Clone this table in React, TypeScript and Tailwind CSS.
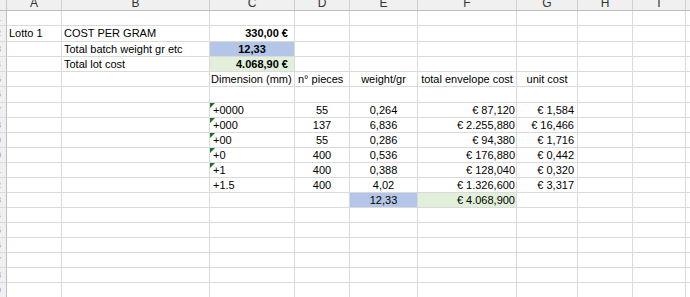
import React from "react";

type Cell = {
  t?: string;
  a?: "l" | "c" | "r";
  b?: boolean;
  bg?: string;
  pad?: string;
  tri?: boolean;
};

const widths = [
  "w-[55px]",
  "w-[148px]",
  "w-[85px]",
  "w-[55px]",
  "w-[68px]",
  "w-[99px]",
  "w-[61px]",
  "w-[55px]",
  "w-[53px]",
];

const letters = ["A", "B", "C", "D", "E", "F", "G", "H", "I"];

const E: Cell = {};

const rows: { h: string; cells: Cell[] }[] = [
  { h: "h-[15px]", cells: [] },
  {
    h: "h-[16px]",
    cells: [
      { t: "Lotto 1", a: "l" },
      { t: "COST PER GRAM", a: "l" },
      { t: "330,00 €", a: "r", b: true, pad: "pr-[6px]" },
    ],
  },
  {
    h: "h-[15px]",
    cells: [E, { t: "Total batch weight gr etc", a: "l" }, { t: "12,33", a: "c", b: true, bg: "bg-[#b4c6e7]" }],
  },
  {
    h: "h-[15px]",
    cells: [E, { t: "Total lot cost", a: "l" }, { t: "4.068,90 €", a: "r", b: true, bg: "bg-[#e2efda]", pad: "pr-[6px]" }],
  },
  {
    h: "h-[15px]",
    cells: [
      E,
      E,
      { t: "Dimension (mm)", a: "l", pad: "pl-[1px]" },
      { t: "n° pieces", a: "l", pad: "pl-[3px]" },
      { t: "weight/gr", a: "c" },
      { t: "total envelope cost", a: "c" },
      { t: "unit cost", a: "c" },
    ],
  },
  { h: "h-[16px]", cells: [] },
  ...[
    ["+0000", "55", "0,264", "€ 87,120", "€ 1,584", true],
    ["+000", "137", "6,836", "€ 2.255,880", "€ 16,466", true],
    ["+00", "55", "0,286", "€ 94,380", "€ 1,716", true],
    ["+0", "400", "0,536", "€ 176,880", "€ 0,442", true],
    ["+1", "400", "0,388", "€ 128,040", "€ 0,320", true],
    ["+1.5", "400", "4,02", "€ 1.326,600", "€ 3,317", false],
  ].map((r) => ({
    h: "h-[15px]",
    cells: [
      E,
      E,
      { t: r[0] as string, a: "l" as const, pad: "pl-[3px]", tri: r[5] as boolean },
      { t: r[1] as string, a: "c" as const },
      { t: r[2] as string, a: "c" as const },
      { t: r[3] as string, a: "r" as const, pad: "pr-[1px]" },
      { t: r[4] as string, a: "r" as const, pad: "pr-[3px]" },
    ],
  })),
  {
    h: "h-[15px]",
    cells: [
      E,
      E,
      E,
      E,
      { t: "12,33", a: "c", bg: "bg-[#b4c6e7]" },
      { t: "€ 4.068,900", a: "r", bg: "bg-[#e2efda]", pad: "pr-[1px]" },
    ],
  },
  ...Array.from({ length: 7 }, () => ({ h: "h-[15px]", cells: [] as Cell[] })),
];

function CellBox({ c, w }: { c: Cell; w: string }) {
  const align =
    c.a === "r" ? "justify-end" : c.a === "c" ? "justify-center" : "justify-start";
  const pad = c.pad ?? (c.a === "r" ? "pr-[2px]" : c.a === "c" ? "" : "pl-[2px]");
  return (
    <div
      className={`relative shrink-0 ${w} h-full flex items-center ${align} ${pad} border-r border-b border-[#dadada] overflow-hidden whitespace-nowrap ${
        c.bg ?? ""
      } ${c.b ? "font-bold" : ""}`}
    >
      {c.tri && (
        <span className="absolute left-0 top-0 w-0 h-0 border-t-[5px] border-t-[#1a6e2e] border-r-[5px] border-r-transparent" />
      )}
      {c.t}
    </div>
  );
}

export default function App() {
  return (
    <div
      className="w-[690px] h-[297px] overflow-hidden bg-white text-black text-[11px] leading-none"
      style={{ fontFamily: '"Liberation Sans", Arial, sans-serif' }}
    >
      {/* column header */}
      <div className="flex h-[11px] bg-[#f0f0f0] border-b border-[#bdbdbd] text-[#333] text-[12px]">
        <div className="shrink-0 w-[7px] h-full border-r border-[#c6c6c6]" />
        {letters.map((l, i) => (
          <div
            key={l}
            className={`shrink-0 ${widths[i]} h-full flex items-end justify-center pb-[1px] border-r border-[#d0d0d0] overflow-hidden leading-[12px]`}
          >
            {l}
          </div>
        ))}
        <div className="flex-1 h-full" />
      </div>
      {rows.map((r, ri) => (
        <div key={ri} className={`flex ${r.h}`}>
          <div className="shrink-0 w-[7px] h-full bg-[#f0f0f0] border-r border-b border-r-[#bdbdbd] border-b-[#dadada] flex items-center justify-end pr-[5px] overflow-hidden text-[9px] text-[#999]">
            {ri + 1}
          </div>
          {widths.map((w, ci) => (
            <CellBox key={ci} c={r.cells[ci] ?? {}} w={w} />
          ))}
          <div className="flex-1 h-full border-b border-[#dadada]" />
        </div>
      ))}
    </div>
  );
}
